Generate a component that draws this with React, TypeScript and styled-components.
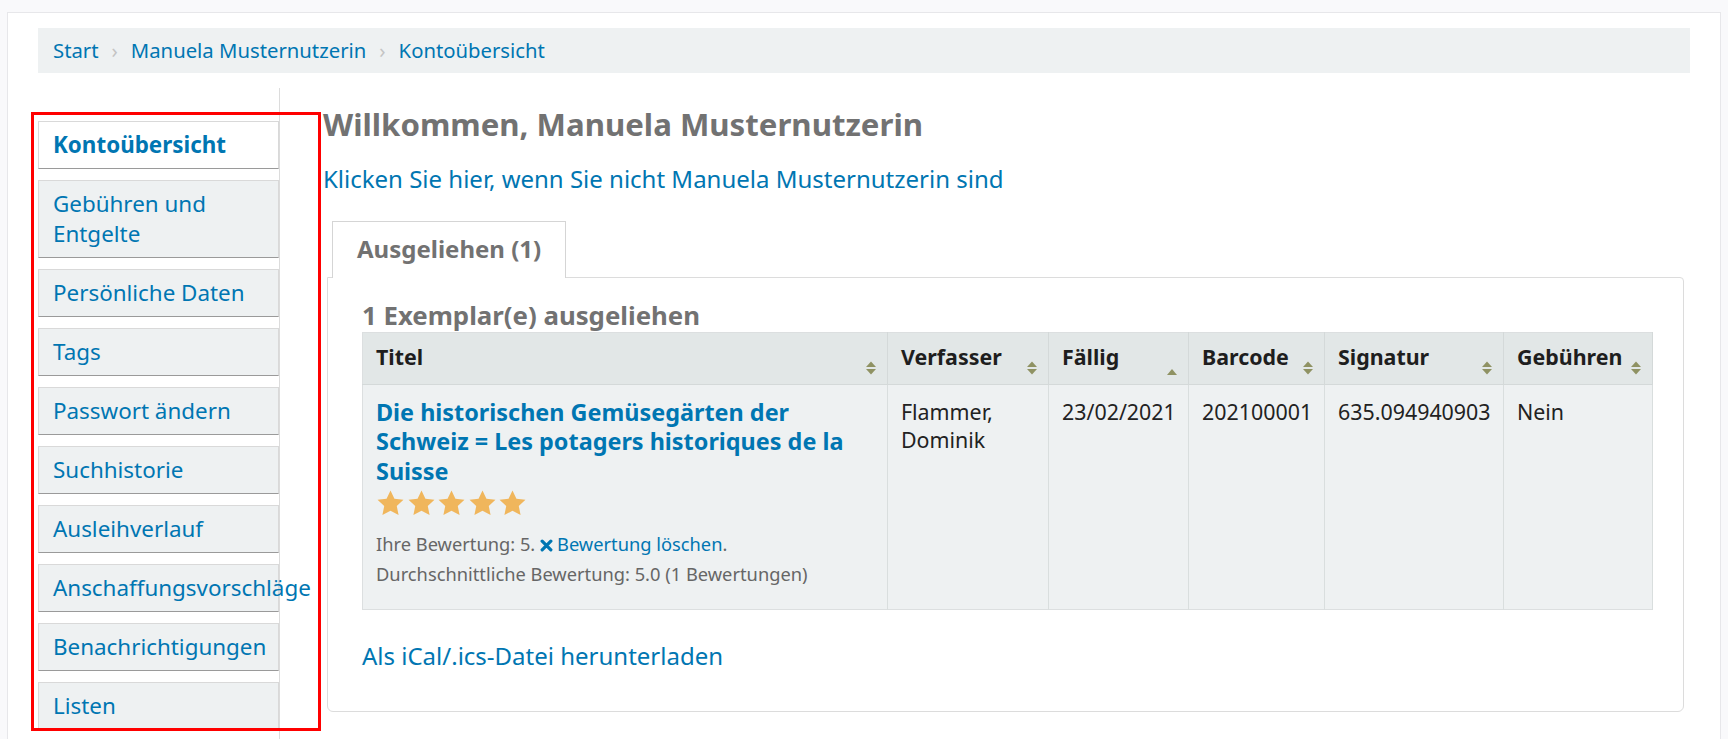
import React from "react";
import styled, { createGlobalStyle } from "styled-components";

const GlobalStyle = createGlobalStyle`
  html, body { margin: 0; padding: 0; }
  body {
    background: #f9f9fb;
    font-family: "Noto Sans", "Open Sans", sans-serif;
    color: #222;
  }
  * { box-sizing: border-box; }
`;

const Page = styled.div`
  height: 739px;
  overflow: hidden;
  padding: 12px 7px 0 7px;
`;

const Panel = styled.div`
  background: #fff;
  border: 1px solid #e7e7ea;
  border-bottom: none;
  padding: 15px 30px 0 30px;
  min-height: 760px;
`;

const Breadcrumb = styled.nav`
  display: flex;
  align-items: center;
  background: #eef1f2;
  padding: 8px 15px 9px;
  margin-bottom: 15px;
  font-size: 20.3px;
  line-height: 28px;
`;

const Crumb = styled.a`
  color: #0076b2;
  text-decoration: none;
`;

const Sep = styled.span`
  color: #c4c4c4;
  margin: 0 13px;
`;

const Columns = styled.div`
  display: flex;
  height: 680px;
`;

const Sidebar = styled.aside`
  position: relative;
  flex: 0 0 240px;
  border-right: 1px solid #dcdcdc;
  padding-top: 32.7px;
`;

const Annotation = styled.div`
  position: absolute;
  left: -7px;
  top: 24px;
  width: 290px;
  height: 619px;
  border: 3px solid #ff0000;
  z-index: 3;
  pointer-events: none;
`;

const NavItem = styled.a<{ $active?: boolean }>`
  position: relative;
  z-index: 1;
  display: block;
  width: 241px;
  margin-bottom: 10.4px;
  padding: 8.3px 14px;
  font-size: 22.4px;
  line-height: 30px;
  color: #0076b2;
  text-decoration: none;
  font-weight: ${(p) => (p.$active ? 700 : 400)};
  background: ${(p) => (p.$active ? "#ffffff" : "#eef1f2")};
  border: 1px solid #d9d9d9;
  border-bottom-color: #9a9a9a;
`;

const Main = styled.main`
  flex: 1;
  min-width: 0;
  padding-left: 43px;
`;

const Title = styled.h1`
  margin: 18.3px 0 0;
  font-size: 31.2px;
  line-height: 37px;
  font-weight: 700;
  color: #727272;
`;

const SwitchLink = styled.a`
  display: block;
  margin-top: 20.4px;
  font-size: 24px;
  line-height: 29.3px;
  color: #0076b2;
  text-decoration: none;
`;

const Tabs = styled.div`
  margin: 28.3px 6px 0 4px;
`;

const TabList = styled.div`
  display: flex;
  padding-left: 5px;
`;

const Tab = styled.div`
  position: relative;
  z-index: 1;
  margin-bottom: -1px;
  padding: 12.3px 24px 14.3px;
  background: #fff;
  border: 1px solid #d5d5d5;
  border-bottom: none;
  font-size: 24px;
  line-height: 28.8px;
  font-weight: 700;
  color: #727272;
`;

const TabPanel = styled.div`
  border: 1px solid #dcdcdc;
  border-radius: 0 4px 6px 6px;
  padding: 23px 33px 40px 34px;
`;

const SectionTitle = styled.h2`
  margin: 0 0 2.5px;
  font-size: 25.8px;
  line-height: 28.4px;
  font-weight: 700;
  color: #727272;
`;

const Table = styled.table`
  width: 100%;
  table-layout: fixed;
  border-collapse: collapse;
  border: 1px solid #dcdfe0;
`;

const Th = styled.th`
  position: relative;
  text-align: left;
  vertical-align: top;
  white-space: nowrap;
  background: #e2e7e7;
  padding: 10.5px 26px 12.8px 13px;
  font-size: 21.4px;
  line-height: 28.3px;
  font-weight: 700;
  color: #1e1e1e;
  border-right: 1px solid #d4d9d9;
  border-bottom: 1px solid #d4d9d9;
`;

const Td = styled.td`
  vertical-align: top;
  background: #eef1f2;
  padding: 13px 13px 12px;
  font-size: 21.4px;
  line-height: 28.3px;
  color: #222;
  border-right: 1px solid #d9dede;
`;

const TitleLink = styled.a`
  display: block;
  font-size: 23.4px;
  line-height: 29.3px;
  font-weight: 700;
  color: #0076b2;
  text-decoration: none;
`;

const Stars = styled.div`
  display: flex;
  gap: 1.5px;
  margin-top: 3.5px;
  height: 27px;
`;

const Rating = styled.div`
  margin: 12.6px 0 9.5px;
  font-size: 18.3px;
  line-height: 29.4px;
  color: #666;
`;

const InlineLink = styled.a`
  color: #0076b2;
  text-decoration: none;
`;

const XIcon = styled.svg`
  width: 13px;
  height: 13px;
  margin-right: 4px;
  vertical-align: -1px;
`;

const SortSvg = styled.svg`
  position: absolute;
  right: 10px;
  bottom: 9px;
  width: 12px;
  height: 14px;
`;

const ICalLink = styled.a`
  display: block;
  margin-top: 31px;
  font-size: 24px;
  line-height: 29.3px;
  color: #0076b2;
  text-decoration: none;
`;

const Star = () => (
  <svg width="29" height="27" viewBox="0 0 24 23">
    <path
      d="M12 0.4l3.35 7.05 7.7 0.95-5.7 5.3 1.55 7.7L12 17.6l-6.9 3.8 1.55-7.7L0.95 8.4l7.7-0.95z"
      fill="#f0b65c"
    />
  </svg>
);

const Sort = ({ mode }: { mode: "both" | "asc" }) => (
  <SortSvg viewBox="0 0 12 14">
    {mode === "both" ? (
      <>
        <path d="M6 0.5L11 6H1z" fill="#8f9263" />
        <path d="M6 13.5L1 8H11z" fill="#8f9263" />
      </>
    ) : (
      <path d="M6 8L11 14H1z" fill="#8f9263" />
    )}
  </SortSvg>
);

const navItems = [
  "Kontoübersicht",
  "Gebühren und Entgelte",
  "Persönliche Daten",
  "Tags",
  "Passwort ändern",
  "Suchhistorie",
  "Ausleihverlauf",
  "Anschaffungsvorschläge",
  "Benachrichtigungen",
  "Listen",
];

const columns: { label: string; width: number; sort: "both" | "asc" }[] = [
  { label: "Titel", width: 525, sort: "both" },
  { label: "Verfasser", width: 161, sort: "both" },
  { label: "Fällig", width: 140, sort: "asc" },
  { label: "Barcode", width: 136, sort: "both" },
  { label: "Signatur", width: 179, sort: "both" },
  { label: "Gebühren", width: 149, sort: "both" },
];

export default function App() {
  return (
    <>
      <GlobalStyle />
      <Page>
        <Panel>
          <Breadcrumb>
            <Crumb href="#">Start</Crumb>
            <Sep>›</Sep>
            <Crumb href="#">Manuela Musternutzerin</Crumb>
            <Sep>›</Sep>
            <Crumb href="#">Kontoübersicht</Crumb>
          </Breadcrumb>
          <Columns>
            <Sidebar>
              <Annotation />
              {navItems.map((n, i) => (
                <NavItem key={n} href="#" $active={i === 0}>
                  {n}
                </NavItem>
              ))}
            </Sidebar>
            <Main>
              <Title>Willkommen, Manuela Musternutzerin</Title>
              <SwitchLink href="#">
                Klicken Sie hier, wenn Sie nicht Manuela Musternutzerin sind
              </SwitchLink>
              <Tabs>
                <TabList>
                  <Tab>Ausgeliehen (1)</Tab>
                </TabList>
                <TabPanel>
                  <SectionTitle>1 Exemplar(e) ausgeliehen</SectionTitle>
                  <Table>
                    <colgroup>
                      {columns.map((c) => (
                        <col key={c.label} style={{ width: c.width }} />
                      ))}
                    </colgroup>
                    <thead>
                      <tr>
                        {columns.map((c) => (
                          <Th key={c.label}>
                            {c.label}
                            <Sort mode={c.sort} />
                          </Th>
                        ))}
                      </tr>
                    </thead>
                    <tbody>
                      <tr>
                        <Td>
                          <TitleLink href="#">
                            Die historischen Gemüsegärten der Schweiz = Les
                            potagers historiques de la Suisse
                          </TitleLink>
                          <Stars>
                            <Star />
                            <Star />
                            <Star />
                            <Star />
                            <Star />
                          </Stars>
                          <Rating>
                            <div>
                              Ihre Bewertung: 5.{" "}
                              <InlineLink href="#">
                                <XIcon viewBox="0 0 12 12">
                                  <path
                                    d="M2 2L10 10M10 2L2 10"
                                    stroke="#0076b2"
                                    strokeWidth="3"
                                    strokeLinecap="round"
                                  />
                                </XIcon>
                                Bewertung löschen
                              </InlineLink>
                              .
                            </div>
                            <div>
                              Durchschnittliche Bewertung: 5.0 (1 Bewertungen)
                            </div>
                          </Rating>
                        </Td>
                        <Td>Flammer, Dominik</Td>
                        <Td>23/02/2021</Td>
                        <Td>202100001</Td>
                        <Td>635.094940903</Td>
                        <Td>Nein</Td>
                      </tr>
                    </tbody>
                  </Table>
                  <ICalLink href="#">Als iCal/.ics-Datei herunterladen</ICalLink>
                </TabPanel>
              </Tabs>
            </Main>
          </Columns>
        </Panel>
      </Page>
    </>
  );
}
